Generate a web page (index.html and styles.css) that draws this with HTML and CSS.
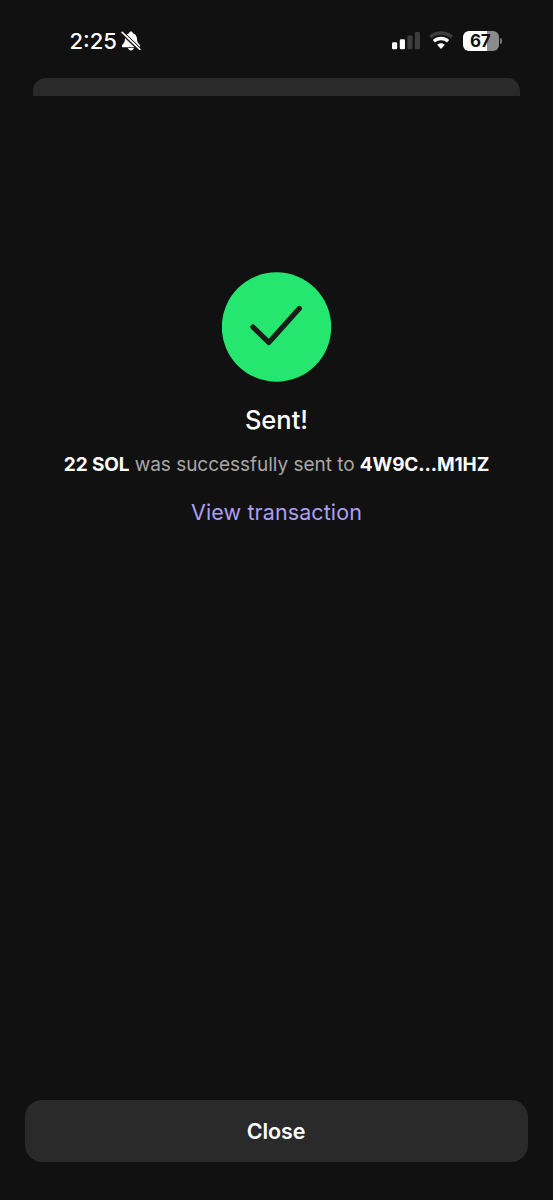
FILE: index.html
```html
<!DOCTYPE html>
<html lang="en">
<head>
<meta charset="utf-8">
<title>Sent</title>
<link rel="stylesheet" href="styles.css">
</head>
<body>
<div class="screen">
  <header class="status">
    <div class="status-left">
      <span class="time">2:25</span>
      <svg class="bell" width="20" height="20" viewBox="0 0 20 20">
        <path fill="#fff" d="M10 .6c-1 0-1.800.7-1.900 1.600C5.600 3 4.100 5 4 7.800c-.1 3.200-.9 4.200-2.200 5.400-.8.8-1.100 1.500-.9 2.200.2.600.7.900 1.500.900h15.200c.8 0 1.300-.3 1.500-.9.2-.7-.1-1.400-.9-2.200C16.900 12 16.100 11 16 7.800 15.900 5 14.400 3 11.900 2.200 11.800 1.300 11 .6 10 .6zM7.100 17c.3 1.500 1.400 2.500 2.900 2.500s2.600-1 2.900-2.500z"/>
        <path d="M.6 1.200 18.800 18.600" stroke="#111" stroke-width="3.900"/>
        <path d="M1.200 1.400 18.700 18.200" stroke="#fff" stroke-width="1.700" stroke-linecap="round"/>
      </svg>
    </div>
    <div class="status-right">
      <svg class="signal" width="28" height="18" viewBox="0 0 28 18">
        <rect x="0" y="10.300" width="5.200" height="6.900" rx="1.300" fill="#fff"/>
        <rect x="7.800" y="7.200" width="5.200" height="10" rx="1.300" fill="#fff"/>
        <rect x="15.300" y="3.600" width="5.200" height="13.600" rx="1.300" fill="#3d3d3d"/>
        <rect x="22.800" y="0" width="5.200" height="17.200" rx="1.300" fill="#3d3d3d"/>
      </svg>
      <svg class="wifi" width="24" height="18" viewBox="0 0 24 18">
        <path d="M1.300 6.100C7.300.6 16.700.6 22.700 6.100" fill="none" stroke="#3d3d3d" stroke-width="3.500"/>
        <path d="M4.900 10.200C8.900 6.600 15.100 6.600 19.100 10.200" fill="none" stroke="#fff" stroke-width="3.300"/>
        <path d="M8.100 13.800C10.300 11.600 13.700 11.600 15.900 13.800L12.500 17.500Q12 17.900 11.500 17.500Z" fill="#fff"/>
      </svg>
      <div class="battery"><span class="battery-level">67</span><span class="battery-nub"></span></div>
    </div>
  </header>
  <div class="sheet-edge"></div>
  <main class="result">
    <svg class="success" width="110" height="110" viewBox="0 0 110 110">
      <circle cx="54.500" cy="55" r="54.700" fill="#25e76f"/>
      <path d="M31 55.100 46.800 70.400 77.300 36.500" fill="none" stroke="#191d1a" stroke-width="5.200" stroke-linecap="round" stroke-linejoin="round"/>
    </svg>
    <h1 class="title">Sent!</h1>
    <p class="message"><b>22 SOL</b> was successfully sent to <b>4W9C...M1HZ</b></p>
    <a class="link">View transaction</a>
  </main>
  <button class="close">Close</button>
</div>
</body>
</html>
```
FILE: styles.css
```css
* { box-sizing: border-box; }
body { margin: 0; background: #111; }
.screen {
  width: 553px;
  height: 1200px;
  display: flex;
  flex-direction: column;
  background: #111;
  color: #fff;
  font-family: Inter, sans-serif;
}
.status {
  height: 78px;
  padding: 31px 51px 0 69.500px;
  display: flex;
  justify-content: space-between;
  align-items: flex-start;
}
.status-left, .status-right { display: flex; align-items: flex-start; }
.time {
  width: 51.500px;
  font-size: 22px;
  line-height: 20px;
  font-weight: 550;
  white-space: nowrap;
}
.bell { display: block; }
.signal { margin: 1px 9px 0 0; }
.wifi { margin: 0 9.500px 0 0; }
.battery { display: flex; align-items: center; }
.battery-level {
  width: 36.500px;
  height: 19.500px;
  border-radius: 6px;
  background: linear-gradient(90deg, #fff 67%, #8b8b8b 67%);
  color: #111;
  font-size: 17px;
  line-height: 20px;
  font-weight: 700;
  letter-spacing: -0.300px;
  text-indent: -1px;
  text-align: center;
}
.battery-nub {
  width: 2px;
  height: 6px;
  margin-left: 1px;
  border-radius: 0 2px 2px 0;
  background: #777;
}
.sheet-edge {
  height: 17.500px;
  margin: 0 33px;
  border-radius: 13px 13px 0 0;
  background: #2a2a2a;
}
.result {
  flex: 1;
  padding-top: 176.500px;
  display: flex;
  flex-direction: column;
  align-items: center;
}
.title {
  margin: 22px 0 0;
  font-size: 25.500px;
  line-height: 32px;
  font-weight: 550;
}
.message {
  margin: 15px 0 0;
  font-size: 19px;
  line-height: 28px;
  letter-spacing: -0.030px;
  color: #a8a8a8;
  white-space: nowrap;
}
.message b { color: #fff; font-weight: 700; letter-spacing: -0.130px; }
.link {
  margin-top: 19px;
  font-size: 21.500px;
  line-height: 28px;
  letter-spacing: 0.100px;
  color: #ab9ff2;
}
.close {
  height: 62.500px;
  margin: 0 25px 38px;
  padding: 0 1px 0 0;
  border: 0;
  border-radius: 17px;
  background: #2a2a2a;
  color: #fff;
  font: 600 21.500px/28px Inter, sans-serif;
  letter-spacing: -0.100px;
}
```
